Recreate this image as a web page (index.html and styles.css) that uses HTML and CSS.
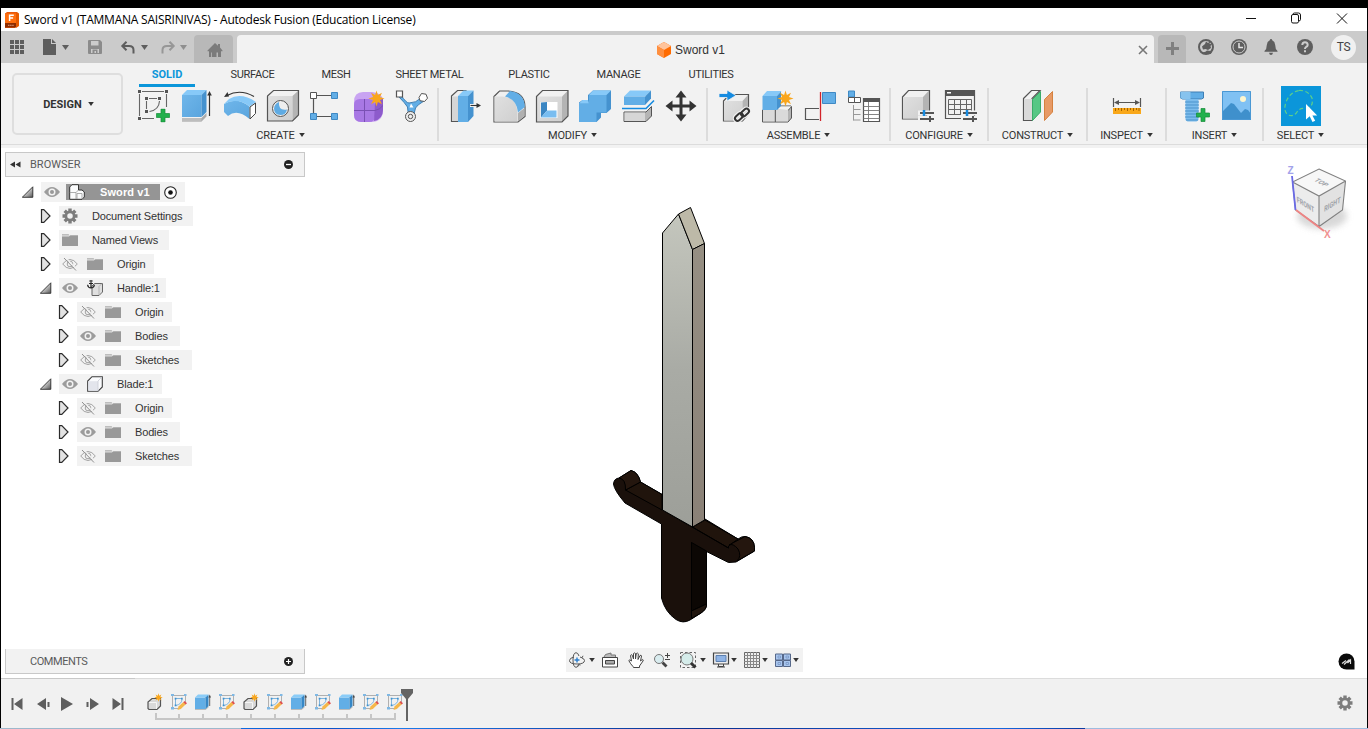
FILE: index.html
```html
<!DOCTYPE html>
<html lang="en">
<head>
<meta charset="utf-8">
<title>Sword v1 - Autodesk Fusion</title>
<link rel="stylesheet" href="styles.css">
</head>
<body>
<svg class="defs" width="0" height="0" aria-hidden="true">
  <defs>
    <linearGradient id="gBlue" x1="0" y1="0" x2="1" y2="1"><stop offset="0" stop-color="#6fb6ea"/><stop offset="1" stop-color="#5aa5de"/></linearGradient>
    <linearGradient id="gGrey" x1="0" y1="0" x2="1" y2="1"><stop offset="0" stop-color="#e0e0e0"/><stop offset="1" stop-color="#cfcfcf"/></linearGradient>
    <linearGradient id="gTri" x1="0" y1="0" x2="1" y2="1"><stop offset="0.3" stop-color="#f0f0f0"/><stop offset="1" stop-color="#555"/></linearGradient>
    <linearGradient id="gBlade" x1="0" y1="0" x2="0" y2="1"><stop offset="0" stop-color="#c4c6bd"/><stop offset="0.5" stop-color="#a9aba5"/><stop offset="1" stop-color="#9d9f99"/></linearGradient>
    <linearGradient id="gSide" x1="0" y1="0" x2="0" y2="1"><stop offset="0" stop-color="#968f83"/><stop offset="1" stop-color="#8a8177"/></linearGradient>
    <filter id="soft" x="-30%" y="-30%" width="160%" height="160%"><feGaussianBlur stdDeviation="3"/></filter>
    <symbol id="caret" viewBox="0 0 7 5"><path d="M0 0h7L3.500 5z" fill="currentColor"/></symbol>
    <symbol id="star" viewBox="-9 -9 18 18"><path d="M0-8.500 1.500-3.700 5.800-6 3.700-1.600 8.500 0 3.700 1.600 5.800 6 1.500 3.700 0 8.500-1.500 3.700-5.800 6-3.700 1.600-8.500 0-3.700-1.600-5.800-6-1.500-3.700z" fill="#f9a61c"/></symbol>
    <symbol id="plus" viewBox="0 0 14 14"><path d="M5 .5h4V5h4.500v4H9v4.500H5V9H.5V5H5z" fill="#22b04c" stroke="#168c38" stroke-width=".7"/></symbol>
    <symbol id="eye" viewBox="0 0 16 16"><path d="M0 8Q4 3 8 3t8 5q-4 5-8 5T0 8z" fill="#9c9c9c"/><circle cx="8" cy="8" r="3.500" fill="#f2f2f2"/><circle cx="8" cy="8" r="2" fill="#999"/></symbol>
    <symbol id="eyeoff" viewBox="0 0 16 16"><path d="M.7 8Q4 3.500 8 3.500T15.300 8Q12 12.500 8 12.500T.7 8z" fill="none" stroke="#a2a2a2"/><circle cx="8" cy="8" r="2.800" fill="none" stroke="#a2a2a2"/><path d="M3.500 1.500l12 12.500" stroke="#f2f2f2" stroke-width="1.200"/><path d="M2 2l12 12.500" stroke="#8f8f8f"/></symbol>
    <symbol id="folder" viewBox="0 0 16 16"><path d="M0 2h6.500l1 1.200H16V5H0z" fill="#bdbdbd"/><path d="M0 4.500h7L8.500 3.500H16V14H0z" fill="#999"/><path d="M0 3.900h7L8.200 2.900" stroke="#e4e4e4" stroke-width=".8" fill="none"/></symbol>
    <symbol id="gear" viewBox="-8 -8 16 16"><g fill="currentColor"><path id="tooth" d="M-1.700-7.500h3.400V-4h-3.400zM-1.700 4h3.400v3.500h-3.400zM-7.500-1.700H-4v3.400h-3.500zM4-1.700h3.500v3.400H4z"/><use href="#tooth" transform="rotate(45)"/></g><circle r="4.100" fill="none" stroke="currentColor" stroke-width="2.700"/></symbol>
    <symbol id="closed" viewBox="0 0 12 16"><path d="M1.500 1.700h2.300L10 8l-6.200 6.300H1.500z" fill="#e3e3e3" stroke="#2b2b2b" stroke-width="1.200"/></symbol>
    <symbol id="open" viewBox="0 0 12 12"><path d="M.3 11.300h10.500V.8z" fill="url(#gTri)" stroke="#2b2b2b" stroke-width=".9"/></symbol>
    <symbol id="body" viewBox="0 0 16 16"><path d="M.7 15.300V5L5 .7h10.300V11L11 15.300z" fill="#fafbfd" stroke="#3c3c3c" stroke-width="1.100"/><path d="M1.300 5.200H11v9.500H1.300z" fill="#e3e5ec"/><path d="M11 5v10M11 5l4-4" stroke="#c9ccd4" stroke-width=".8" fill="none"/></symbol>
    <symbol id="anchor" viewBox="0 0 16 16"><path d="M5 15.500V6L7.500 3.500h8V12L12 15.500z" fill="#dfdfdf" stroke="#666"/><path d="M12 6.500V15M12 6.500l3-3" stroke="#aaa" stroke-width=".8"/><path d="M4 2.500V8M2 3.500h4M.6 4.800Q1 8 4 8t3.400-3.200" fill="none" stroke="#222" stroke-width="1.200"/><circle cx="4" cy="1" r="1.100" fill="none" stroke="#222"/></symbol>
    <symbol id="tComp" viewBox="0 0 18 18"><path d="M2 15.500V9l4-3.500h8.500V13L11 16.500H3z" fill="#d9d9d9" stroke="#555" stroke-width="1.200"/><path d="M3 9.500h7.500V16" stroke="#f5f5f5" fill="none"/><use href="#star" x="8" y="0" width="9" height="9"/></symbol>
    <symbol id="tSketch" viewBox="0 0 18 18"><path d="M2 2.500h14M2.500 2v14M15.500 2v8M2 15.500h8" stroke="#b0b0b0"/><path d="M1 1h3v2H1zM14 1h2.500v2H14zM1 14h3v2.500H1z" fill="#7fb8e4"/><path d="M5.500 6v6M6 5.500h5M12 6q0 5-6 6.500" stroke="#7fb4dc" fill="none"/><path d="M4.700 4.700h1.700v1.700H4.700zM11 4.700h1.700v1.700H11zM4.700 11.500h1.700v1.700H4.700z" fill="#3f92d0"/><path d="M7.500 17l1-3.500 5-4.500 2.300 2.300-5 4.700z" fill="#f5b74a"/><path d="M13.300 9.200l1.400-1.200 2.300 2.300-1.300 1.200z" fill="#e05050"/></symbol>
    <symbol id="tExtrude" viewBox="0 0 18 18"><path d="M1 15.500h10.500l3-2.500v1.500l-3 2.500H1z" fill="#bbb"/><path d="M1 4.500h10.500V16H1z" fill="#62aee6"/><path d="M1 4.500 4 1.500h10.500l-3 3z" fill="#8accf8"/><path d="M11.500 4.500l3-3V13l-3 3z" fill="#3687c6"/><path d="M15.700 4v9" stroke="#666"/><path d="M14.500 4.500 15.700 1.500 17 4.500z" fill="#444"/></symbol>
  </defs>
</svg>

<div class="app">
  <header class="titlebar">
    <svg class="logo" width="14" height="16" viewBox="0 0 14 16"><path d="M0 1.500 2 0h10v13l-2 3H0z" fill="#e8590c"/><path d="M0 1.500h11V11H0z" fill="#ff6f0f"/><path d="M0 11h11v4.500H0z" fill="#8e2c00"/><path d="M12 0l2 1.500V14l-3 2V2z" fill="#e65a00"/><path d="M4.600 9V3.200h4.200M4.600 6h3.500" stroke="#fff" stroke-width="1.500" fill="none"/><path d="M3 13.300h6" stroke="#e0a080" stroke-dasharray="1.500 .6"/></svg>
    <h1>Sword v1 (TAMMANA SAISRINIVAS) - Autodesk Fusion (Education License)</h1>
    <svg class="winctl" width="108" height="23" viewBox="0 0 108 23" fill="none" stroke="#111"><path d="M0 10.500h10"/><path d="M45.500 8q0-1.500 1.500-1.500h4q1.500 0 1.500 1.500v5.500q0 1.500-1.500 1.500h-4q-1.500 0-1.500-1.500zM47 6q.3-1 1.500-1h4Q54.500 5 54.500 7v4.500q0 1.200-1.500 1.500"/><path d="M91 5.500l10 10m0-10l-10 10"/></svg>
  </header>

  <div class="tabbar">
    <div class="quick">
      <svg width="14" height="14" viewBox="0 0 14 14" fill="#5e5e5e"><path d="M0 0h4v4H0zM5 0h4v4H5zM10 0h4v4h-4zM0 5h4v4H0zM5 5h4v4H5zM10 5h4v4h-4zM0 10h4v4H0zM5 10h4v4H5zM10 10h4v4h-4z"/></svg>
      <svg class="q-file" width="13" height="16" viewBox="0 0 13 16"><path d="M0 0h8v5h5v11H0zM9 0l4 4H9z" fill="#5e5e5e"/></svg>
      <svg class="q-car1" width="7" height="5"><use href="#caret"/></svg>
      <svg class="q-save" width="14" height="14" viewBox="0 0 14 14"><path d="M1 0h11l2 2v11q0 1-1 1H1q-1 0-1-1V1q0-1 1-1z" fill="#8b8b8b"/><path d="M3 1h7.500v4.500H3zM3 9h8v4H3z" fill="#ccc"/><path d="M4.500 9.500h5V13H8v-2H6.500v2h-2z" fill="#8b8b8b"/></svg>
      <svg class="q-undo" width="14" height="13" viewBox="0 0 14 13" fill="none" stroke="#5e5e5e" stroke-width="2"><path d="M5.500.7 1.300 5l4.200 4.200M1.500 5H8q4.500 0 4.500 4v3.500"/></svg>
      <svg class="q-car2" width="7" height="5"><use href="#caret"/></svg>
      <svg class="q-redo" width="14" height="13" viewBox="0 0 14 13" fill="none" stroke="#979797" stroke-width="2"><path d="M8.500.7 12.700 5 8.500 9.200M12.500 5H6Q1.500 5 1.500 9v3.500"/></svg>
      <svg class="q-car3" width="7" height="5"><use href="#caret"/></svg>
    </div>
    <div class="hometab"><svg width="16" height="14" viewBox="0 0 16 14" fill="#7b7b7b"><path d="M8 0l3 2.700V1h2v3.500L15.500 7.500v.8H.5v-.8zM2 8h12v6h-3v-4.500H9.500V14H5V9.500h-.8V14H2zM6 9.500h2V14H6z"/></svg></div>
    <div class="doctab">
      <svg width="14" height="16" viewBox="0 0 14 16"><path d="M7 0l7 4v8l-7 4-7-4V4z" fill="#ff6b00"/><path d="M7 0l7 4-7 4-7-4z" fill="#ffc49c"/><path d="M0 4l7 4v8l-7-4z" fill="#ff8f3f"/></svg>
      <span>Sword v1</span>
      <svg class="close" width="10" height="10" viewBox="0 0 10 10"><path d="M1 1l8 8m0-8L1 9" stroke="#777" stroke-width="1.600"/></svg>
    </div>
    <div class="addtab"><svg width="13" height="13" viewBox="0 0 13 13"><path d="M5 0h3v5h5v3H8v5H5V8H0V5h5z" fill="#808080"/></svg></div>
    <div class="status">
      <svg width="16" height="16" viewBox="0 0 16 16"><circle cx="8" cy="8" r="7" fill="#cbcbcb" stroke="#5e5e5e" stroke-width="2"/><path d="M4.500 13.500Q8 13 9 11.500l3.500.5 2-2.500L13 15H4zM5 10.500 4 7.500 7 5 8 2.500 10 4l2.500-2-1 3L14 5l-1.500 2 .5 2-3 2-2.500-1z" fill="#5e5e5e"/></svg>
      <svg width="16" height="16" viewBox="0 0 16 16"><circle cx="8" cy="8" r="8" fill="#5e5e5e"/><circle cx="8" cy="8" r="6" fill="none" stroke="#ccc"/><path d="M8 4v4.500h4" stroke="#e5e5e5" stroke-width="1.500" fill="none"/></svg>
      <svg width="14" height="16" viewBox="0 0 14 16" fill="#5e5e5e"><path d="M7 0q1.200 0 1.200 1.300Q11 2.500 11.200 6q0 4 2.300 6v.8H.5V12q2.300-2 2.300-6Q3 2.500 5.800 1.300 5.800 0 7 0zM5 13.700h4Q8.500 16 7 16t-2-2.300z"/></svg>
      <svg class="help" width="16" height="16" viewBox="0 0 16 16"><circle cx="8" cy="8" r="8" fill="#5e5e5e"/><path d="M5.300 6q0-2.800 2.700-2.800T10.700 6Q10.700 7.300 9 8q-1 .6-1 2M8 11.300v2" stroke="#ccc" stroke-width="2" fill="none"/></svg>
      <span class="avatar">TS</span>
    </div>
  </div>

  <div class="ribbon">
    <button class="workspace">DESIGN <svg width="6" height="4"><use href="#caret"/></svg></button>
    <div class="tools">
      <nav class="tabs">
        <a class="tab tab-solid">SOLID</a><a class="tab tab-surface">SURFACE</a><a class="tab tab-mesh">MESH</a><a class="tab tab-sheet">SHEET METAL</a><a class="tab tab-plastic">PLASTIC</a><a class="tab tab-manage">MANAGE</a><a class="tab tab-util">UTILITIES</a>
      </nav>
      <div class="groups">
        <section class="group g-create">
          <div class="icons">
            <svg viewBox="0 0 36 36"><path d="M8 3.500h22M5.500 6v22M32.500 6v13M8 30.500h12M15 10.500h8M12.500 13v8M25.500 13q-.5 9-10 10.500" stroke="#666" stroke-width="1.100" fill="none"/><path d="M4 2h3v3H4zM31 2h3v3h-3zM4 29h3v3H4zM11 9h3v3h-3zM24 9h3v3h-3zM11 22h3v3h-3z" fill="#555"/><use href="#plus" x="22" y="20.500" width="14" height="14"/></svg>
            <svg viewBox="0 0 36 36"><path d="M5 30h19.500l5-5v3.500l-5 5H5z" fill="#aaa"/><path d="M5 30h19.500v3.500H5z" fill="#bdbdbd"/><path d="M5 7h19.500v22H5z" fill="url(#gBlue)"/><path d="M5 7l5-5h19.500l-5 5z" fill="#87c9f8"/><path d="M24.500 7l5-5v22l-5 5z" fill="#4592cf"/><path d="M32.500 6v22" stroke="#333" stroke-width="1.200"/><path d="M30.200 7.500 32.500 3l2.300 4.500z" fill="#333"/></svg>
            <svg viewBox="0 0 36 36"><path d="M4 16Q17 8.500 29.500 18.500V31Q17 20 8 28l-4-4z" fill="url(#gBlue)"/><path d="M4 16l5-5Q21 4 36 14l-6.500 4.500Q17 9 4 16z" fill="#87c9f8"/><path d="M30 19l5.500-4v10.500L30 31z" fill="#fff" stroke="#444"/><path d="M7 7.500Q20 .5 34 8.500" stroke="#333" stroke-width="1.200" fill="none"/><path d="M4 9l3.500-5 1.500 4.500z" fill="#333"/></svg>
            <svg viewBox="0 0 36 36"><path d="M4.500 8l6-5.500h25V27l-6 6h-25z" fill="#f1f1f1"/><path d="M4.500 8h25v25h-25z" fill="url(#gGrey)"/><path d="M29.500 8l6-5.500V27l-6 6z" fill="#b4b4b4"/><path d="M4.500 8l6-5.500h25V27l-6 6h-25z" fill="none" stroke="#555" stroke-width="1.200"/><circle cx="17.500" cy="20.500" r="8" fill="#eee" stroke="#555"/><path d="M16 14q-1 9 8 7.500Q23 27 17.500 27 11 26.500 11 20.500 11.500 15.500 16 14z" fill="#5fabe3"/></svg>
            <svg viewBox="0 0 36 36"><path d="M11 7.500h14M7.500 11v14M11 28.500h14" stroke="#555" stroke-width="1.200"/><path d="M4.500 4.500h6v6h-6z" fill="#fff" stroke="#555"/><path d="M25.500 4.500h6v6h-6zM4.500 25.500h6v6h-6zM25.500 25.500h6v6h-6z" fill="#62aee6" stroke="#3f89c4"/></svg>
            <svg viewBox="0 0 36 36"><path d="M5 14Q5 4 14 4h9q11 1 11 9v9q0 12-12 12H13q-8 0-8-8z" fill="#c9a4f2"/><path d="M5 17q0-6 6-6h9q6 0 6 6v11q0 6-6 6h-8q-7 0-7-7z" fill="#a878e4"/><path d="M26 15l8-5v12q0 9-9 11z" fill="#8d5bcb"/><path d="M15.500 11v23M5 22.500h21q5-1 8-5" stroke="#7a50b4" fill="none"/><use href="#star" x="19" y="2" width="17" height="17"/></svg>
            <svg viewBox="0 0 36 36"><path d="M9 7q5 8 8 8 7 0 12-5l3 3q-7 4-8.500 7l-2 8h-5l-1-9Q13 15 7 9z" fill="#62aee6" stroke="#3f7fb4"/><path d="M19 15.500l2.500 4h-4z" fill="#fff"/><path d="M4.500 3h6v6h-6z" fill="#fff" stroke="#555" stroke-width="1.200"/><path d="M27 9.500l2.500-4 4.500.7 1.500 4-3 3.300-4.500-.8z" fill="#fff" stroke="#555"/><circle cx="18.500" cy="28.500" r="5" fill="#eee" stroke="#555"/><circle cx="18.500" cy="28.500" r="2.200" fill="none" stroke="#555"/></svg>
          </div>
          <div class="label">CREATE <svg><use href="#caret"/></svg></div>
        </section>
        <section class="group g-modify">
          <div class="icons">
            <svg viewBox="0 0 36 36"><path d="M4.500 8l6-5.500H19V28l-6 5.500H4.500z" fill="#eee" stroke="#555" stroke-width="1.200"/><path d="M5 8.500h6V33H5z" fill="#d6d6d6"/><path d="M11 8h10v26H11z" fill="#62aee6"/><path d="M11 8l5.500-5.500h10L21 8z" fill="#87c9f8"/><path d="M21 8l5.500-5.500V28L21 34z" fill="#4592cf"/><path d="M23 17.500h8" stroke="#fff" stroke-width="3"/><path d="M23.500 17.500h7" stroke="#333" stroke-width="1.200"/><path d="M29.500 15l4.500 2.500-4.500 2.500z" fill="#333"/></svg>
            <svg viewBox="0 0 36 36"><path d="M4 8.500 9.500 3H18Q35 4 35 19v9.500L28 34H4z" fill="#f0f0f0" stroke="#555" stroke-width="1.200"/><path d="M4.500 8.500H12Q27 9 27.500 25v8.500h-23z" fill="url(#gGrey)"/><path d="M28 25l6.500-5v8L28 33.500z" fill="#b0b0b0"/><path d="M15 8.500 20 3Q34.500 5 34.800 19L28 24.500Q27 11.500 15 8.500z" fill="#62aee6"/></svg>
            <svg viewBox="0 0 36 36"><path d="M3.500 8.500l6-6h25.500V28l-6 6H3.500z" fill="#f1f1f1"/><path d="M3.500 8.500H29V34H3.500z" fill="url(#gGrey)"/><path d="M29 8.500l6-6V28l-6 6z" fill="#b4b4b4"/><path d="M3.500 8.500l6-6H35V28l-6 6H3.500z" fill="none" stroke="#555" stroke-width="1.200"/><path d="M7.500 14h17v16h-17z" fill="#fff"/><path d="M8 14.500 14 14v8.500L8 29.500z" fill="#3b86c2"/><path d="M14 22.500h9.500v7H8z" fill="#79bdf0"/></svg>
            <svg viewBox="0 0 36 36"><path d="M3 14.500 6.500 12H12V7l5-4.500h18V21l-4.500 4H25v4.500L20.500 34H3z" fill="#4592cf"/><path d="M3 15.500h10V7h17.500v17.500h-10V34H3z" fill="#62aee6"/><path d="M3 15.500 6.500 12H12l1 3.500zM13 7l4-4.500h18L30.500 7z" fill="#87c9f8"/></svg>
            <svg viewBox="0 0 36 36"><path d="M5 8.500l6-6h21l-6 6z" fill="#87c9f8"/><path d="M5 8.500h21V17H5z" fill="#62aee6"/><path d="M26 8.500l6-6v8L26 17z" fill="#4592cf"/><path d="M3 20.500h24l8-8" stroke="#168be0" stroke-width="1.600" fill="none"/><path d="M5 24h22l5.500-5.500V28L27 33.500H5z" fill="#b4b4b4" stroke="#555"/><path d="M5.500 24.500H26V33H5.500z" fill="#d6d6d6"/></svg>
            <svg viewBox="0 0 36 36"><path d="M19 2.500l5.500 7h-4v7h7v-4l7 5.500-7 5.500v-4h-7v7h4L19 33.500l-5.500-7h4v-7h-7v4l-7-5.500 7-5.500v4h7v-7h-4z" fill="#333"/></svg>
          </div>
          <div class="label">MODIFY <svg><use href="#caret"/></svg></div>
        </section>
        <section class="group g-assemble">
          <div class="icons">
            <svg viewBox="0 0 36 36"><path d="M7.500 13l6-6.500h19V26l-6 7h-19z" fill="#f0f0f0" stroke="#555" stroke-width="1.200"/><path d="M8 13h18.500v19.500H8z" fill="url(#gGrey)"/><path d="M26.500 13l5.500-6v18l-5.500 7z" fill="#b4b4b4"/><path d="M3 5.500h8V2l9 5.500-9 5.500V9.500H3z" fill="#168be0" stroke="#f2f2f2" stroke-width=".8"/><g fill="none" stroke="#f2f2f2" stroke-width="4.500"><rect x="18.500" y="26.500" width="9" height="5" rx="2.500" transform="rotate(-42 23 29)"/><rect x="24.500" y="22" width="9" height="5" rx="2.500" transform="rotate(-42 29 24.500)"/></g><g fill="none" stroke="#333" stroke-width="2"><rect x="18.500" y="26.500" width="9" height="5" rx="2.500" transform="rotate(-42 23 29)"/><rect x="24.500" y="22" width="9" height="5" rx="2.500" transform="rotate(-42 29 24.500)"/></g></svg>
            <svg viewBox="0 0 36 36"><path d="M3.500 22H17l12.500 0 3-3.500V30L29 34H3.500z" fill="#b4b4b4" stroke="#555"/><path d="M4 22h12v11.500H4zM16.500 22H29v11.500H16.500z" fill="#dadada"/><path d="M16.300 22v12M20 18h12" stroke="#555"/><path d="M16.500 21.500 20 18.500h12L28.500 22z" fill="#f2f2f2"/><path d="M3.500 8H18v14H3.500z" fill="#62aee6"/><path d="M3.500 8 8 3h14.500L18 8z" fill="#87c9f8"/><path d="M18 8l4-4.500V18l-4 4z" fill="#4592cf"/><use href="#star" x="18" y="2" width="17" height="17"/></svg>
            <svg viewBox="0 0 36 36"><path d="M17 20.500H3.500v11H17" fill="none" stroke="#555" stroke-width="1.200"/><path d="M20.500 4.500h13v11h-13z" fill="#62aee6" stroke="#3f89c4"/><path d="M18.500 4v29" stroke="#d2232a" stroke-width="1.300"/></svg>
            <svg viewBox="0 0 36 36"><path d="M3.500 3h6v6h-6z" fill="#62aee6" stroke="#3f89c4"/><path d="M3.500 9.500h6v5h-6zM9.500 9.500h6v5h-6z" fill="#fff" stroke="#555"/><path d="M8.500 17v15.500M8.500 21.500h7M8.500 26.500h7M8.500 32h7" stroke="#999" fill="none"/><path d="M18.500 10.500h16v23h-16z" fill="#fff" stroke="#555" stroke-width="1.200"/><path d="M18 10h17v4H18z" fill="#555"/><path d="M23.500 14v19M18.500 18.500h16M18.500 22.500h16M18.500 26.500h16M18.500 30.500h16" stroke="#777" stroke-width=".9"/></svg>
          </div>
          <div class="label">ASSEMBLE <svg><use href="#caret"/></svg></div>
        </section>
        <section class="group odd g-configure">
          <div class="icons">
            <svg viewBox="0 0 36 36"><path d="M2.500 9l6-6.500h21V24L23 31H2.500z" fill="#f1f1f1" stroke="#555" stroke-width="1.200"/><path d="M3 9h20v21.500H3z" fill="url(#gGrey)"/><path d="M23 9l6-6.500V24l-6 6z" fill="#b4b4b4"/><path d="M18 25h16M18 30.500h16" stroke="#f2f2f2" stroke-width="5"/><path d="M20 25h14M20 31h14M30 28v6" stroke="#555" stroke-width="2"/><path d="M24 22v6" stroke="#168be0" stroke-width="2.500"/></svg>
            <svg viewBox="0 0 36 36"><path d="M2.500 2.500h29v28h-29z" fill="#f2f2f2" stroke="#555" stroke-width="1.200"/><path d="M2 2h30v6H2z" fill="#555"/><path d="M4 4h4v1.500H4z" fill="#fff"/><path d="M5.500 11.500h23v15h-23zM5.500 16.500h23M5.500 21.500h23M11.500 11.500v15M17.500 11.500v15M23.500 11.500v15" fill="none" stroke="#666"/><path d="M18 25h16M18 30.500h16" stroke="#f2f2f2" stroke-width="5"/><path d="M20 25h14M20 31h14M30 28v6" stroke="#555" stroke-width="2"/><path d="M24 22v6" stroke="#168be0" stroke-width="2.500"/></svg>
          </div>
          <div class="label">CONFIGURE <svg><use href="#caret"/></svg></div>
        </section>
        <section class="group odd g-construct">
          <div class="icons">
            <svg viewBox="0 0 36 36"><path d="M3.500 10.500l8-8H20l-8 8v22H3.500z" fill="#f3f3f3" stroke="#555" stroke-width="1.200"/><path d="M4 11h8v21H4z" fill="#d9d9d9"/><path d="M12.500 11.500l8-8V24l-8 8.500z" fill="#57c785" stroke="#39ac69"/><path d="M24.500 11.500l8-8V24l-8 8.500z" fill="#e79a66" stroke="#d5813f"/></svg>
          </div>
          <div class="label">CONSTRUCT <svg><use href="#caret"/></svg></div>
        </section>
        <section class="group odd g-inspect">
          <div class="icons">
            <svg viewBox="0 0 36 36"><path d="M4.500 10v9M31.500 10v9M7 14.500h22" stroke="#555" stroke-width="1.200"/><path d="M5 14.500 10 12v5zM31 14.500 26 12v5z" fill="#555"/><path d="M4 20h28v6H4z" fill="#f9a81a"/><path d="M6.500 20v3M9.500 20v2M12.500 20v3M15.500 20v2M18.500 20v3M21.500 20v2M24.500 20v3M27.500 20v2M30 20v3" stroke="#a86500"/></svg>
          </div>
          <div class="label">INSPECT <svg><use href="#caret"/></svg></div>
        </section>
        <section class="group g-insert">
          <div class="icons">
            <svg viewBox="0 0 36 36"><path d="M5.500 4h23v6l-2 1h-19l-2-1z" fill="#62aee6" stroke="#3f7fb4"/><path d="M5.500 4h10v7h-8l-2-1z" fill="#87c3ee"/><path d="M10.500 11h13v21l-2 1.500h-9l-2-1.500z" fill="#7cbcec"/><path d="M10 14h14M10 17h14M10 20h14M10 23h14M10 26h14M10 29h14M11 32h12" stroke="#4b93cc"/><use href="#plus" x="21" y="20" width="14" height="14"/></svg>
            <svg viewBox="0 0 36 36"><path d="M4 3h29v29H4z" fill="#80c1f3"/><path d="M4 24l9-9 3 1 7 9 4-4 3 1 3 4v6H4z" fill="#3f90cc"/><circle cx="25" cy="11" r="3" fill="#fdf6cf"/><path d="M4.500 3.500h28v28h-28z" fill="none" stroke="#4a98d4"/></svg>
          </div>
          <div class="label">INSERT <svg><use href="#caret"/></svg></div>
        </section>
        <section class="group odd g-select">
          <div class="icons">
            <svg class="selected" viewBox="0 0 40 40"><path d="M18 4.500Q27 4 31 12 33 22 24 22.500 18 22 16 26 13 31 7 29 2 25 5 16 9 6 18 4.500z" fill="none" stroke="#5ed08a" stroke-width="1.200" stroke-dasharray="4 2.500"/><path d="M25 18v15.500l3.700-3.200 2.800 5.700 2.700-1.300-2.800-5.200h4.800z" fill="#fff"/></svg>
          </div>
          <div class="label">SELECT <svg><use href="#caret"/></svg></div>
        </section>
      </div>
    </div>
  </div>

  <main class="viewport">
    <svg class="scene" viewBox="1 148 1366 530">
      <g class="edges">
        <path d="M613.500 484Q614 478.500 619 478L631 470.500Q638 472 640.500 482L705 519 738 539Q742 536 745.500 536.500 754 538 754.500 547.500V551L736 562 728.500 562.500 706.500 551.500V604Q707 609 701 613L690 620Q683 624 676 619.500 665 612 661.500 598V524L625 503Q614 490 613.500 484z" fill="#1a100b"/>
        <path d="M625.500 490 640.500 482 662 494.500V510zM692.500 527 705 520 738 539 728.500 546V548z" fill="#20140c"/>
        <path d="M619 478 631 470.500Q638 472 640.500 482L625.500 490Q626 479 619 478z" fill="#24160e"/>
        <path d="M729 545 745 536.500Q754 538 754.500 547.500V551L737 561Q742 556 738 549 733 543 729 545z" fill="#24160e"/>
        <path d="M691.500 542.500 706.500 551V604L691.500 611z" fill="#0c0704"/>
        <path d="M691.500 611 706.500 604Q707 609 701 613L691.500 618.500z" fill="#20150e"/>
        <path d="M662.500 510 728.500 548M691.500 618V542.500" fill="none"/>
        <path d="M662.500 233 678.500 214 692.500 249.500V527L662.500 510z" fill="url(#gBlade)"/>
        <path d="M678.500 214 690.500 207.500 704.500 243.500 692.500 249.500z" fill="#bdb9a8"/>
        <path d="M692.500 249.500 704.500 243.500V520L692.500 527z" fill="url(#gSide)"/>
      </g>
      <g class="cube">
        <ellipse cx="1322" cy="216" rx="25" ry="13" fill="#cfcfcf" opacity=".8" filter="url(#soft)"/>
        <path d="M1319 169 1345.500 181 1319 196 1292.500 182z" fill="#f7f7f7"/>
        <path d="M1292.500 182 1319 196V226.500L1295.500 210z" fill="#ececec"/>
        <path d="M1345.500 181 1319 196V226.500L1342.500 210z" fill="#e2e2e2"/>
        <path d="M1319 169 1345.500 181 1342.500 210 1319 226.500 1295.500 210 1292.500 182zM1292.500 182 1319 196 1345.500 181M1319 196V226.500" fill="none" stroke="#808080" stroke-width="1.100"/>
        <path d="M1292 176 1295.500 210" stroke="#6a6ae6" stroke-width="1.800"/>
        <path d="M1296 210 1324 231" stroke="#ef8484" stroke-width="1.800"/>
        <text class="face" transform="matrix(.75 .4 -.8 .42 1313.500 180.500)">TOP</text>
        <text class="face" transform="matrix(.68 .42 .08 1 1297 202)">FRONT</text>
        <text class="face" transform="matrix(.7 -.42 -.06 1 1324 212)">RIGHT</text>
        <text class="axis" x="1287.500" y="174" fill="#a2a2ea">Z</text>
        <text class="axis" x="1324" y="238" fill="#f09090">X</text>
      </g>
      <g><path d="M1338.500 661.500a8 8 0 0 1 16 0v8h-8a8 8 0 0 1-8-8z" fill="#0a0a0a"/><path d="M1342 663.500l4-3M1344 664.500l5.500-5M1347.500 663l3-3v4" stroke="#ddd" stroke-width="1.200" fill="none"/></g>
    </svg>

    <aside class="browser">
      <div class="panelhead"><svg width="11" height="7" viewBox="0 0 11 7"><path d="M0 3.500 5 .5v6zM5.500 3.500l5-3v6z" fill="#333"/></svg><span>BROWSER</span><svg class="dot" width="9" height="9" viewBox="0 0 9 9"><circle cx="4.500" cy="4.500" r="4.500" fill="#222"/><path d="M2 4.500h5" stroke="#fff" stroke-width="1.300"/></svg></div>
      <ul class="tree">
        <li class="row l0"><svg class="exp" width="12" height="12"><use href="#open"/></svg><div class="node n-root"><svg><use href="#eye"/></svg><b class="picked"><svg viewBox="0 0 16 16"><path d="M.7 15.300V3L3 .7h6.500V6H13l2.300 2v5L13 15.300z" fill="#fbfcfd" stroke="#333"/><path d="M.8 8.500H7V15M7 8.500 9.500 6M8 15V9.500h5V15" stroke="#999" fill="none" stroke-width=".8"/></svg>Sword v1</b><svg class="radio" viewBox="0 0 13 13"><circle cx="6.500" cy="6.500" r="5.800" fill="#fff" stroke="#222" stroke-width="1.100"/><circle cx="6.500" cy="6.500" r="2.300" fill="#111"/></svg></div></li>
        <li class="row l1"><svg class="exp" width="12" height="16"><use href="#closed"/></svg><div class="node n-doc"><svg class="gear"><use href="#gear"/></svg><span>Document Settings</span></div></li>
        <li class="row l1"><svg class="exp" width="12" height="16"><use href="#closed"/></svg><div class="node n-views"><svg><use href="#folder"/></svg><span>Named Views</span></div></li>
        <li class="row l1"><svg class="exp" width="12" height="16"><use href="#closed"/></svg><div class="node n-origin"><svg><use href="#eyeoff"/></svg><svg><use href="#folder"/></svg><span>Origin</span></div></li>
        <li class="row l1"><svg class="exp" width="12" height="12"><use href="#open"/></svg><div class="node n-handle"><svg><use href="#eye"/></svg><svg><use href="#anchor"/></svg><span>Handle:1</span></div></li>
        <li class="row l2"><svg class="exp" width="12" height="16"><use href="#closed"/></svg><div class="node n-origin"><svg><use href="#eyeoff"/></svg><svg><use href="#folder"/></svg><span>Origin</span></div></li>
        <li class="row l2"><svg class="exp" width="12" height="16"><use href="#closed"/></svg><div class="node n-bodies"><svg><use href="#eye"/></svg><svg><use href="#folder"/></svg><span>Bodies</span></div></li>
        <li class="row l2"><svg class="exp" width="12" height="16"><use href="#closed"/></svg><div class="node n-sketches"><svg><use href="#eyeoff"/></svg><svg><use href="#folder"/></svg><span>Sketches</span></div></li>
        <li class="row l1"><svg class="exp" width="12" height="12"><use href="#open"/></svg><div class="node n-blade"><svg><use href="#eye"/></svg><svg><use href="#body"/></svg><span>Blade:1</span></div></li>
        <li class="row l2"><svg class="exp" width="12" height="16"><use href="#closed"/></svg><div class="node n-origin"><svg><use href="#eyeoff"/></svg><svg><use href="#folder"/></svg><span>Origin</span></div></li>
        <li class="row l2"><svg class="exp" width="12" height="16"><use href="#closed"/></svg><div class="node n-bodies"><svg><use href="#eye"/></svg><svg><use href="#folder"/></svg><span>Bodies</span></div></li>
        <li class="row l2"><svg class="exp" width="12" height="16"><use href="#closed"/></svg><div class="node n-sketches"><svg><use href="#eyeoff"/></svg><svg><use href="#folder"/></svg><span>Sketches</span></div></li>
      </ul>
    </aside>

    <div class="panelhead comments"><span>COMMENTS</span><svg class="dot" width="9" height="9" viewBox="0 0 9 9"><circle cx="4.500" cy="4.500" r="4.500" fill="#222"/><path d="M2 4.500h5M4.500 2v5" stroke="#fff" stroke-width="1.200"/></svg></div>

    <div class="navbar">
      <svg class="ni" viewBox="0 0 16 16" fill="none" stroke="#555"><path d="M5 5Q.5 6 .5 8.500.500 12 8 12q7.500 0 7.500-3.500Q15.500 7 13 6"/><path d="M10 4Q9 .7 7 .7 4 1 4 8q0 7 3 7.300 1.500 0 2.300-2M9 14.500l.5-2 2 .5M11 5l2 .8 1-2"/><path d="M5.500 8h5M8 5.500v5" stroke="#2a7fd0" stroke-width="1.400"/></svg>
      <svg class="nc w"><use href="#caret"/></svg>
      <svg class="ni g6" viewBox="0 0 16 16" fill="none" stroke="#444"><path d="M.5 5.500h15v9.500H.5z" fill="#fff"/><path d="M3.500 8.500h9v3.500h-9z" fill="#aaa"/><path d="M2 5l1.500-2.500L9 1v2h4.500V5" fill="#bbb" stroke="#777"/></svg>
      <svg class="ni g10" viewBox="0 0 16 16" fill="#fff" stroke="#444"><path d="M5 14.500Q2.500 12 .8 8.500 1.500 7 3.500 9L2.500 3.500Q3 2 4.300 3.300L5.500 7V1.500Q6.500.3 7.500 1.500V7l.8-5.500Q9.500.5 10.300 1.800L10 7.500l2-4q1.300-.8 1.500.5L12.500 9l1.800-1.500q1.500.2.700 1.500L11.500 14v1.500H5.500z"/></svg>
      <svg class="ni g10" viewBox="0 0 16 16" fill="none" stroke="#444"><circle cx="5" cy="7" r="4.500" fill="#d9ecef" stroke="#777"/><path d="M8.500 10.500l4 4" stroke-width="2.800"/><path d="M11 3.500h5M13.500 1v5M11 7.500h5"/></svg>
      <svg class="ni g10" viewBox="0 0 16 16" fill="none" stroke="#666"><path d="M.5 .5h15v15H.5z" stroke-dasharray="2.500 2"/><circle cx="7" cy="7" r="6" fill="#d5ecea" stroke="#777"/><path d="M11 11l4.500 4.500" stroke="#333" stroke-width="3"/></svg>
      <svg class="nc w"><use href="#caret"/></svg>
      <svg class="ni g6" viewBox="0 0 16 16" fill="none" stroke="#444"><path d="M.5 1h15v11H.5z" fill="#eee" stroke-width="1.200"/><path d="M3 3.500h10v6H3z" fill="#8fb4e6" stroke="#5c7fae"/><path d="M5.500 12v2.500h5V12M4 15h8"/></svg>
      <svg class="nc"><use href="#caret"/></svg>
      <svg class="ni g6" viewBox="0 0 16 16" fill="none" stroke="#666"><path d="M.5.500h15v15H.5z" fill="#eee"/><path d="M3.500 0v16M6.500 0v16M9.500 0v16M12.500 0v16M0 3.500h16M0 6.500h16M0 9.500h16M0 12.500h16" stroke="#888"/></svg>
      <svg class="nc"><use href="#caret"/></svg>
      <svg class="ni g6" viewBox="0 0 16 16" fill="#a9c6ee" stroke="#56688a"><path d="M.5 2h7v6h-7zM8.500 2h7v6h-7zM.5 8.500h7v6h-7zM8.500 8.500h7v6h-7z"/><path d="M3 4h2.500v2H3zM11 4h2.500v2H11zM3 10.500h2.500v2H3zM11 10.500h2.500v2H11z" fill="none" stroke="#7897c4" stroke-width=".8"/></svg>
      <svg class="nc"><use href="#caret"/></svg>
    </div>
  </main>

  <footer class="timeline">
    <div class="accent"></div>
    <div class="player">
      <svg width="12" height="12" viewBox="0 0 12 12"><path d="M.5 0h2v12h-2zM11.500 0v12L3 6z"/></svg>
      <svg width="13" height="12" viewBox="0 0 13 12"><path d="M9 0v12L0 6zM10.500 4h2v5h-2z"/></svg>
      <svg width="12" height="14" viewBox="0 0 12 14"><path d="M0 0l12 7-12 7z"/></svg>
      <svg width="13" height="12" viewBox="0 0 13 12"><path d="M4 0v12l9-6zM.5 4h2v5h-2z"/></svg>
      <svg width="12" height="12" viewBox="0 0 12 12"><path d="M9.500 0h2v12h-2zM.5 0v12L9 6z"/></svg>
    </div>
    <div class="track">
      <div class="features">
        <svg><use href="#tComp"/></svg><svg><use href="#tSketch"/></svg><svg><use href="#tExtrude"/></svg><svg><use href="#tSketch"/></svg><svg><use href="#tComp"/></svg><svg><use href="#tSketch"/></svg><svg><use href="#tExtrude"/></svg><svg><use href="#tSketch"/></svg><svg><use href="#tExtrude"/></svg><svg><use href="#tSketch"/></svg><svg><use href="#tSketch"/></svg>
      </div>
      <svg class="rail" width="242" height="8" viewBox="0 0 242 8"><path d="M1 0v6h239V0M24 1v5M48 1v5M72 1v5M96 1v5M120 1v5M144 1v5M168 1v5M192 1v5M216 1v5" fill="none" stroke="#c6c6c6" stroke-width="2"/></svg>
    </div>
    <svg class="marker" width="12" height="32" viewBox="0 0 12 32"><path d="M0 0h12v4L7 10v22H5V10L0 4z" fill="#646464"/></svg>
    <svg class="gear settings"><use href="#gear"/></svg>
  </footer>
</div>
<div class="strip"></div>
</body>
</html>
```
FILE: styles.css
```css
* { box-sizing: border-box; }
body {
  margin: 0;
  padding-top: 8px;
  width: 1368px;
  height: 729px;
  overflow: hidden;
  background: #000;
  color: #333;
  font: 11px/14px "Liberation Sans", Arial, sans-serif;
}
svg { display: block; flex: none; overflow: visible; }
.defs { position: absolute; }
.app {
  width: 1366px;
  height: 720px;
  margin-left: 1px;
  display: flex;
  flex-direction: column;
  background: #fff;
}

/* Title bar */
.titlebar { height: 23px; display: flex; align-items: center; padding-left: 4px; }
.titlebar h1 {
  margin: 0 0 0 5px;
  color: #000;
  font: 12px/23px "Open Sans", "Noto Sans", sans-serif;
  letter-spacing: -0.22px;
  white-space: nowrap;
}
.winctl { margin-left: auto; margin-right: 13px; }

/* Document tabs */
.tabbar { height: 32px; display: flex; background: #cbcbcb; color: #5e5e5e; }
.quick { width: 193px; display: flex; align-items: center; padding-left: 9px; }
.q-file { margin-left: 19px; }
.q-car1 { margin-left: 6px; }
.q-save { margin-left: 19px; }
.q-undo { margin-left: 19px; }
.q-car2 { margin-left: 6px; }
.q-redo { margin-left: 13px; }
.q-car3 { margin-left: 5px; color: #8f8f8f; }
.hometab, .doctab, .addtab { margin-top: 4px; height: 28px; border-radius: 4px 4px 0 0; display: flex; align-items: center; }
.hometab { width: 39px; padding: 2px 0 0 13px; background: #b8b8b8; }
.doctab { width: 917px; margin-left: 4px; padding: 1px 0 0 420px; background: #f2f2f2; color: #333; font-size: 12px; }
.doctab span { margin-left: 4px; }
.doctab .close { margin-left: auto; margin-right: 6px; }
.addtab { width: 28px; margin-left: 4px; padding: 0 0 1px 8px; background: #b8b8b8; }
.status { display: flex; align-items: center; margin-left: 12px; gap: 17px; }
.help { margin-left: 2px; }
.avatar {
  width: 25px; height: 25px; margin-left: 1px; border-radius: 50%;
  background: #f0f0f0; color: #444;
  font: 12px/25px Roboto, sans-serif; text-align: center; letter-spacing: -0.4px;
}

/* Ribbon */
.ribbon { height: 85px; display: flex; background: #f2f2f2; border-bottom: 3px solid #f2f2f2; font-family: Roboto, sans-serif; box-shadow: inset 0 -1px 0 #dcdcdc; }
.workspace {
  width: 111px; height: 62px; margin: 10px 0 0 11px; padding: 1px 0 0 2px;
  border: 2px solid #dedede; border-radius: 5px; background: none; color: #333;
  display: flex; align-items: center; justify-content: center; gap: 6px;
  font: bold 11px/14px Roboto, sans-serif;
}
.workspace svg { margin-top: -1px; }
.tabs { display: flex; height: 25px; padding-left: 16px; }
.tab { height: 24px; padding-top: 5px; text-align: center; letter-spacing: -0.3px; white-space: nowrap; }
.tab-solid { width: 56px; margin-right: 11px; color: #0b96da; font-weight: bold; letter-spacing: 0; border-bottom: 3px solid #0b96da; }
.tab-surface { width: 93px; }
.tab-mesh { width: 74px; }
.tab-sheet { width: 113px; }
.tab-plastic { width: 86px; }
.tab-manage { width: 93px; }
.tab-util { width: 92px; }
.groups { display: flex; height: 53px; }
.group + .group { background: linear-gradient(#dcdcdc, #dcdcdc) left / 1px 100% no-repeat; box-shadow: -1px 0 0 #dcdcdc; }
.g-create { width: 315px; }
.g-modify { width: 269px; }
.g-assemble { width: 183px; }
.g-configure { width: 98px; }
.g-construct { width: 99px; }
.g-inspect { width: 79px; }
.g-insert { width: 97px; }
.g-select { width: 75px; }
.icons { display: flex; justify-content: center; gap: 7px; height: 40px; }
.odd .icons { padding-left: 1px; }
.icons svg { width: 36px; height: 36px; }
.icons .selected { width: 40px; height: 40px; margin-top: -2px; background: #0b96da; }
.label { display: flex; align-items: center; justify-content: center; gap: 4px; padding-top: 1px; letter-spacing: -0.2px; }
.label svg { width: 6px; height: 4px; margin-top: -3px; }

/* Viewport */
.viewport { position: relative; height: 530px; }
.scene { width: 1366px; height: 530px; }
.edges { stroke: #000; stroke-width: 1; stroke-linejoin: round; }
.face { font: bold 8px Roboto, sans-serif; fill: #9ea2a8; }
.axis { font: bold 10px "Liberation Sans", sans-serif; }
.browser { position: absolute; left: 4px; top: 4px; width: 300px; }
.panelhead {
  width: 300px; height: 25px; padding: 0 11px 0 4px;
  display: flex; align-items: center;
  border: 1px solid #c8c8c8; background: #f2f2f2; color: #5a5a5a;
  font-family: Roboto, sans-serif;
}
.panelhead span { margin-left: 9px; }
.panelhead .dot { margin-left: auto; }
.comments { position: absolute; left: 4px; top: 501px; border-top: 0; padding: 1px 11px 0 15px; letter-spacing: -0.45px; }
.tree { list-style: none; margin: 3px 0 0; padding: 0; }
.row { height: 24px; display: flex; align-items: center; }
.l0 { padding-left: 17px; }
.l1 { padding-left: 35px; }
.l2 { padding-left: 53px; }
.exp { margin-right: 7px; }
.node { height: 20px; padding-left: 3px; display: flex; align-items: center; background: #f2f2f2; white-space: nowrap; letter-spacing: -0.15px; }
.node svg { width: 16px; height: 16px; }
.node svg + svg { margin-left: 9px; }
.node span { margin-left: 14px; }
.gear { color: #7d7d7d; }
.n-root { width: 144px; }
.n-doc { width: 134px; }
.n-views { width: 110px; }
.n-origin { width: 95px; }
.n-handle { width: 107px; }
.n-bodies { width: 103px; }
.n-sketches { width: 115px; }
.n-blade { width: 103px; }
.picked { display: flex; align-items: center; gap: 15px; width: 94px; height: 16px; margin-left: 6px; padding-left: 3px; background: #959595; color: #fff; letter-spacing: 0.1px; }
.node .radio { width: 13px; height: 13px; margin-left: 4px; }

.navbar { position: absolute; left: 565px; top: 500px; width: 237px; height: 24px; padding-left: 3px; display: flex; align-items: center; background: #f2f2f2; }
.ni { width: 16px; height: 16px; }
.g6 { margin-left: 6px; }
.g10 { margin-left: 10px; }
.nc { width: 6px; height: 4px; margin: 0 1px 0 2px; color: #333; }
.nc.w { margin-left: 4px; }

/* Timeline */
.timeline { height: 50px; display: grid; grid-template-columns: 146px 250px 1fr auto; align-items: start; border-top: 1px solid #dcdcdc; background: #f1f1f1; }
.accent { grid-column: 1 / -1; width: 134px; height: 1px; margin-top: -1px; background: #c8c8c8; }
.player { display: grid; grid-template-columns: 26px 24px 25px 26px 12px; align-items: center; height: 47px; padding-left: 10px; fill: #5e5e5e; }
.track { padding-top: 13px; }
.features { display: flex; gap: 6px; margin-left: -1px; }
.features svg { width: 18px; height: 18px; }
.rail { margin: 2px 0 0 8px; }
.marker { margin: 9px 0 0 4px; }
.settings { width: 16px; height: 16px; margin: 15px 14px 0 0; }
.strip { width: 1368px; height: 1px; background: linear-gradient(90deg, #9db8cc 0 241px, #0b6be0 241px, #0b53c8 330px, #1a7bea 400px, #0a2f8e 700px, #1467dd 1000px, #0b3aa0 1085px, #9dbce0 1085px); }
```
